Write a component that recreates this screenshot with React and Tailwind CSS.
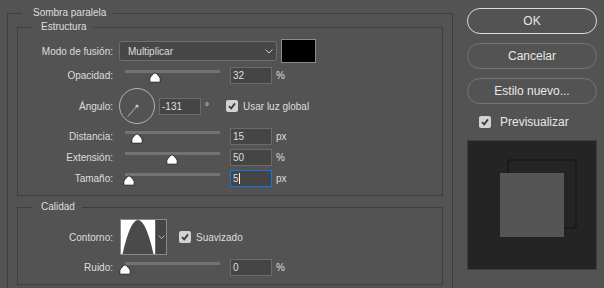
import React from 'react';

const Check = () => (
  <div className="w-[12px] h-[12px] shrink-0 rounded-[2px] bg-[#d2d2d2] flex items-center justify-center">
    <svg width="8" height="8" viewBox="0 0 8 8">
      <path d="M1 4.2 L3.2 6.3 L7 1.4" stroke="#3a3a3a" strokeWidth="1.8" fill="none" />
    </svg>
  </div>
);

const Label = ({ children }) => (
  <div className="w-[95px] shrink-0 text-right">{children}</div>
);

const Thumb = ({ x }) => (
  <svg
    width="12"
    height="11"
    viewBox="0 0 12 11"
    className="absolute top-[5px]"
    style={{ left: x - 6 }}
  >
    <path
      d="M6 0.8 C7 0.8 11.2 5 11.2 6.5 L11.2 10.2 L0.8 10.2 L0.8 6.5 C0.8 5 5 0.8 6 0.8 Z"
      fill="#fff"
      stroke="#262626"
      strokeWidth="1"
    />
  </svg>
);

const Field = ({ value, focused }) => (
  <div
    className={
      focused
        ? 'ml-[10px] w-[42px] h-[17px] shrink-0 bg-[#454545] border border-[#1473e6] pl-[2px] flex items-center'
        : 'ml-[10px] w-[42px] h-[17px] shrink-0 bg-[#454545] border border-[#6b6b6b] pl-[2px] flex items-center'
    }
  >
    {value}
    {focused && <span className="w-px h-[11px] bg-[#f0f0f0]" />}
  </div>
);

const SliderRow = ({ label, thumb, value, unit, focused, className }) => (
  <div className={'flex items-center h-[17px] ' + (className || '')}>
    <Label>{label}</Label>
    <div className="relative ml-[12px] w-[95px] h-[17px] shrink-0">
      <div className="mt-[3px] h-[3px] bg-[#737373]" />
      <Thumb x={thumb} />
    </div>
    <Field value={value} focused={focused} />
    <div className="ml-[4px]">{unit}</div>
  </div>
);

const Button = ({ children, primary, className }) => (
  <div
    className={
      (primary
        ? 'border-[#dcdcdc] '
        : 'border-[#747474] ') +
      'h-[26px] rounded-full border flex items-center justify-center text-[12px] text-[#e8e8e8] ' +
      (className || '')
    }
  >
    {children}
  </div>
);

export default function App() {
  return (
    <div className="w-[604px] h-[288px] overflow-hidden bg-[#535353] flex items-start pl-[7px] pt-[7px] font-['Liberation_Sans',Arial,sans-serif] text-[10px] text-[#dedede]">
      <fieldset className="w-[446px] shrink-0 border border-[#3e3e3e] pt-[2px] px-[9px] pb-[9px]">
        <legend className="ml-[5px] pl-[11px] pr-[7px] leading-[12px]">Sombra paralela</legend>

        <fieldset className="border border-[#3e3e3e] pt-[6px] pb-[8px]">
          <legend className="ml-[14px] pl-[9px] pr-[6px] leading-[12px]">Estructura</legend>

          <div className="flex items-center h-[24px]">
            <Label>Modo de fusión:</Label>
            <div className="ml-[6px] w-[158px] h-[20px] shrink-0 rounded-[3px] bg-[#474747] border border-[#6e6e6e] pl-[8px] pr-[3px] flex items-center justify-between">
              <span>Multiplicar</span>
              <svg width="8" height="5" viewBox="0 0 8 5">
                <path d="M0.5 0.5 L4 4 L7.5 0.5" stroke="#c8c8c8" fill="none" />
              </svg>
            </div>
            <div className="ml-[4px] w-[35px] h-[24px] shrink-0 bg-black border border-[#8c8c8c]" />
          </div>

          <SliderRow className="mt-[4px]" label="Opacidad:" thumb={30} value="32" unit="%" />

          <div className="mt-[4px] flex items-center h-[36px]">
            <Label>Ángulo:</Label>
            <svg width="36" height="36" viewBox="0 0 36 36" className="ml-[6px] shrink-0">
              <circle cx="18" cy="18" r="17.5" stroke="#b4b4b4" fill="none" />
              <line x1="18" y1="18" x2="8.8" y2="28.6" stroke="#b4b4b4" strokeWidth="1" />
              <circle cx="18" cy="18" r="1.6" fill="#c4c4c4" />
            </svg>
            <div className="ml-[4px] w-[42px] h-[17px] shrink-0 bg-[#454545] border border-[#6b6b6b] pl-[2px] flex items-center">
              -131
            </div>
            <div className="ml-[4px]">°</div>
            <div className="ml-[17px]">
              <Check />
            </div>
            <div className="ml-[5px]">Usar luz global</div>
          </div>

          <SliderRow className="mt-[4px]" label="Distancia:" thumb={12} value="15" unit="px" />
          <SliderRow className="mt-[4px]" label="Extensión:" thumb={47} value="50" unit="%" />
          <SliderRow className="mt-[4px]" label="Tamaño:" thumb={4} value="5" unit="px" focused />
        </fieldset>

        <fieldset className="mt-[5px] border border-[#3e3e3e] pt-[6px] pb-[8px]">
          <legend className="ml-[14px] pl-[9px] pr-[7px] leading-[12px]">Calidad</legend>

          <div className="flex items-center h-[36px]">
            <Label>Contorno:</Label>
            <div className="ml-[7px] w-[47px] h-[36px] shrink-0 flex border border-[#8a8a8a]">
              <div className="w-[34px] h-full bg-white">
                <svg width="34" height="34" viewBox="0 0 34 34">
                  <path d="M1.5 34 Q17 -34 32.5 34 Z" fill="#4a4a4a" />
                </svg>
              </div>
              <div className="flex-1 bg-[#454545] border-l border-[#6b6b6b] flex items-center justify-center">
                <svg width="7" height="4" viewBox="0 0 7 4">
                  <path d="M0.5 0.5 L3.5 3.5 L6.5 0.5" stroke="#b8b8b8" fill="none" />
                </svg>
              </div>
            </div>
            <div className="ml-[12px]">
              <Check />
            </div>
            <div className="ml-[5px]">Suavizado</div>
          </div>

          <SliderRow className="mt-[4px]" label="Ruido:" thumb={0} value="0" unit="%" />
        </fieldset>
      </fieldset>

      <div className="ml-[14px] w-[130px] shrink-0 pt-[1px] flex flex-col">
        <Button primary>OK</Button>
        <Button className="mt-[9px]">Cancelar</Button>
        <Button className="mt-[9px]">Estilo nuevo...</Button>
        <div className="mt-[10px] h-[16px] pl-[12px] flex items-center text-[12px] text-[#e8e8e8]">
          <Check />
          <span className="ml-[9px]">Previsualizar</span>
        </div>
        <div className="relative mt-[10px] w-[130px] h-[130px] bg-[#242424] border border-[#3d3d3d]">
          <div className="absolute left-[39px] top-[18px] w-[70px] h-[70px] rounded-[4px] border-2 border-[#1a1a1a] blur-[0.6px]" />
          <div className="absolute left-[32px] top-[32px] w-[64px] h-[64px] bg-[#555555]" />
        </div>
      </div>
    </div>
  );
}
